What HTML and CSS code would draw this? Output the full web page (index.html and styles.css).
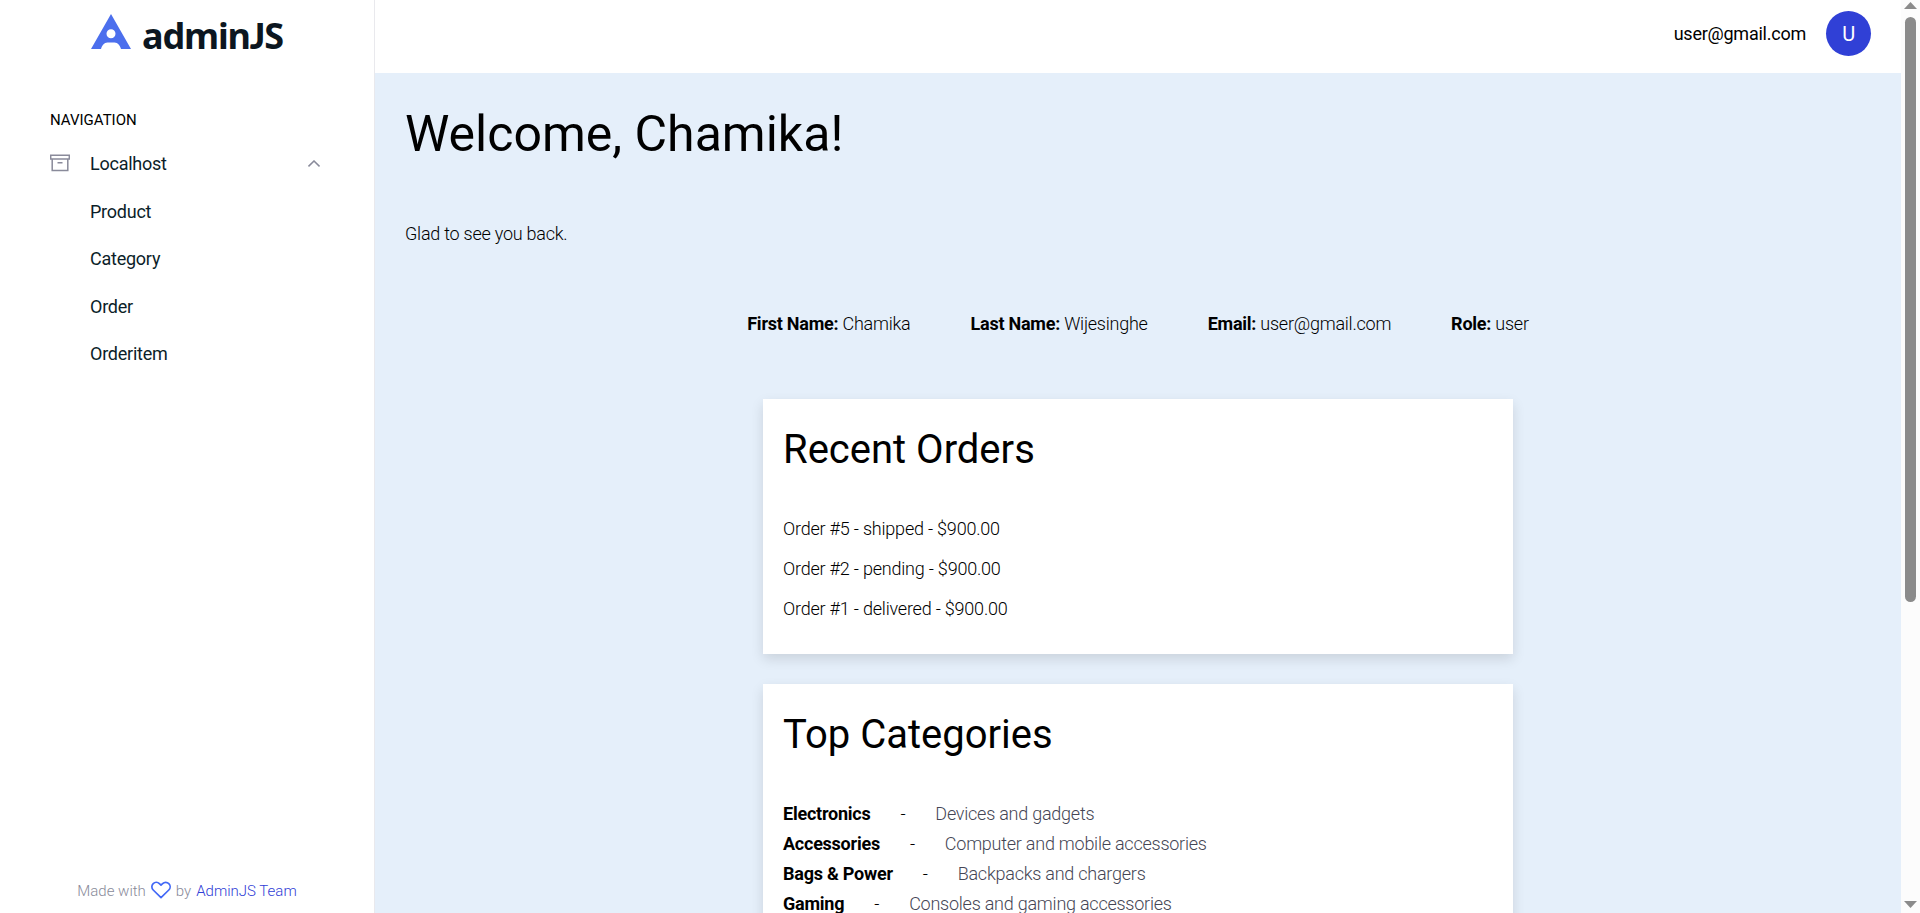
FILE: index.html
```html
<!DOCTYPE html>
<html lang="en">
<head>
<meta charset="utf-8">
<title>AdminJS</title>
<link rel="stylesheet" href="styles.css">
</head>
<body>
<div class="app">
  <aside class="sidebar">
    <a class="logo">
      <svg class="logo-mark" width="40" height="35" viewBox="0 0 40 35"><path fill="#4c6fed" fill-rule="evenodd" d="M20 0 40 35H30C29 31.500 27 28.500 23.500 28.500H16.500C13 28.500 11 31.500 10 35H0ZM20 15.300a4.500 4.500 0 1 0 0 9a4.500 4.500 0 1 0 0-9Z"/></svg>
      <span class="logo-text">admin<span class="logo-js">J</span>S</span>
    </a>
    <nav class="nav">
      <div class="nav-title">NAVIGATION</div>
      <a class="nav-item nav-parent">
        <svg class="archive" width="20" height="18" viewBox="0 0 20 18" fill="none" stroke="#898a9a" stroke-width="1.500"><path d="M.7 1.200h18.600v3.800H.7zM2.200 5v11.400h15.600V5M7.500 8.700h5"/></svg>
        <span>Localhost</span>
        <svg class="chevron" width="12" height="7" viewBox="0 0 12 7" fill="none" stroke="#898a9a" stroke-width="1.500"><path d="m.5 6.400 5.500-5.400 5.500 5.400"/></svg>
      </a>
      <a class="nav-item">Product</a>
      <a class="nav-item">Category</a>
      <a class="nav-item">Order</a>
      <a class="nav-item">Orderitem</a>
    </nav>
    <footer class="made">
      <span>Made with</span>
      <svg width="20" height="18" viewBox="0 0 20 18" fill="none" stroke="#4268f6" stroke-width="1.700" stroke-linejoin="round"><path d="M10 16.700 2.200 9C.4 7.200.4 4.400 2.200 2.600 3.900.9 6.700.9 8.400 2.600L10 4.200l1.600-1.600c1.700-1.700 4.500-1.700 6.200 0 1.800 1.800 1.800 4.600 0 6.400Z"/></svg>
      <span>by</span>
      <a class="team">AdminJS Team</a>
    </footer>
  </aside>
  <div class="main">
    <header class="topbar">
      <span>user@gmail.com</span>
      <span class="avatar">U</span>
    </header>
    <main class="content">
      <h1>Welcome, Chamika!</h1>
      <p class="greeting">Glad to see you back.</p>
      <div class="profile">
        <span><b>First Name:</b> Chamika</span>
        <span><b>Last Name:</b> Wijesinghe</span>
        <span><b>Email:</b> user@gmail.com</span>
        <span><b>Role:</b> user</span>
      </div>
      <section class="card">
        <h2>Recent Orders</h2>
        <ul class="orders">
          <li>Order #5 - shipped - $900.00</li>
          <li>Order #2 - pending - $900.00</li>
          <li>Order #1 - delivered - $900.00</li>
        </ul>
      </section>
      <section class="card">
        <h2>Top Categories</h2>
        <ul class="categories">
          <li><b>Electronics</b><span>-</span><span class="desc">Devices and gadgets</span></li>
          <li><b>Accessories</b><span>-</span><span class="desc">Computer and mobile accessories</span></li>
          <li><b>Bags &amp; Power</b><span>-</span><span class="desc">Backpacks and chargers</span></li>
          <li><b>Gaming</b><span>-</span><span class="desc">Consoles and gaming accessories</span></li>
        </ul>
      </section>
    </main>
  </div>
  <div class="scrollbar">
    <svg width="13" height="7" viewBox="0 0 13 7"><path fill="#8b8b8b" d="M6.500 0 13 7H0Z"/></svg>
    <div class="thumb"></div>
    <svg class="down" width="13" height="7" viewBox="0 0 13 7"><path fill="#8b8b8b" d="M0 0h13L6.500 7Z"/></svg>
  </div>
</div>
</body>
</html>
```
FILE: styles.css
```css
* { box-sizing: border-box; }
body {
  margin: 0;
  font: 300 18px/30px Roboto, sans-serif;
  letter-spacing: -0.24px;
  color: #000;
  overflow: hidden;
}
h1, h2, p, ul { margin: 0; padding: 0; list-style: none; }
h1, h2 { font-weight: 400; letter-spacing: 0; }
b { font-weight: 700; }
svg { display: block; flex: none; }
.app { display: flex; height: 913px; background: #fff; overflow: hidden; }

.sidebar {
  width: 375px;
  flex: none;
  display: flex;
  flex-direction: column;
  border-right: 1px solid #e9e9ed;
}
.logo { display: flex; height: 66px; padding: 14px 0 0 91px; gap: 11px; }
.logo-text {
  font: 700 36px/44px "Noto Sans", sans-serif;
  letter-spacing: -1.15px;
  color: #0c1620;
}
.logo-js { font-family: Lato, sans-serif; font-weight: 900; line-height: 1; }
.nav { padding: 39px 50px 0; font-weight: 400; }
.nav-title { font-size: 15px; height: 30px; letter-spacing: 0; }
.nav-item {
  display: flex;
  align-items: center;
  height: 47.5px;
  padding-left: 40px;
  color: #0c1e29;
}
.nav-parent { padding: 0; margin-top: 5.4px; gap: 20px; }
.archive { margin-top: -2px; }
.chevron { margin: -2px 4px 0 auto; }
.made {
  display: flex;
  align-items: center;
  justify-content: center;
  gap: 5px;
  margin-top: auto;
  padding-bottom: 7px;
  font-size: 15px;
  letter-spacing: 0;
  color: #898a9a;
}
.made svg { margin-top: -2px; }
.team { color: #3040d6; }

.main { flex: 1; min-width: 0; display: flex; flex-direction: column; }
.topbar {
  height: 73px;
  flex: none;
  display: flex;
  justify-content: flex-end;
  align-items: flex-start;
  gap: 20px;
  padding: 11px 30px 0 0;
  font-weight: 400;
  line-height: 45px;
}
.avatar {
  width: 45px;
  height: 45px;
  border-radius: 50%;
  background: #3040d6;
  color: #fff;
  font-size: 20px;
  line-height: 46px;
  text-align: center;
}
.content {
  flex: 1;
  min-height: 0;
  overflow: hidden;
  background: #e5effa;
  display: flex;
  flex-direction: column;
  padding: 31px 0 0;
}
.content > * { flex: none; }
h1 { font-size: 50px; line-height: 60px; padding-left: 30px; }
.greeting { padding: 55px 0 0 30px; }
.profile { display: flex; justify-content: center; gap: 60px; padding-top: 60px; }
.card {
  width: 750px;
  margin: 60px auto 0;
  padding: 21px 20px 30px;
  background: #fff;
  box-shadow: 0 5px 12px rgba(0, 0, 0, 0.12);
}
.card + .card { margin-top: 30px; }
h2 { font-size: 40px; line-height: 60px; }
.orders { display: grid; gap: 10px; padding-top: 34px; letter-spacing: -0.21px; }
.categories { padding-top: 34px; }
.categories li { display: flex; gap: 30px; }
.desc { color: #454655; }

.scrollbar {
  width: 19px;
  flex: none;
  display: flex;
  flex-direction: column;
  align-items: center;
  padding: 2px 0 5px;
  background: #fcfcfc;
}
.thumb { width: 11px; height: 585px; margin-top: 8px; border-radius: 6px; background: #8b8b8b; }
.down { margin-top: auto; }
```
